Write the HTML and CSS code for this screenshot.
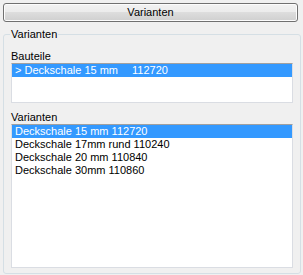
FILE: index.html
```html
<!DOCTYPE html>
<html lang="de">
<head>
    <meta charset="UTF-8">
    <title>Varianten</title>
    <link rel="stylesheet" href="styles.css">
</head>
<body>
    <button class="tab-button">Varianten</button>
    <fieldset class="group">
        <legend>Varianten</legend>
        <div class="field-label">Bauteile</div>
        <div class="listbox parts">
            <div class="row selected"><span class="part-name">&gt; Deckschale 15 mm</span>112720</div>
        </div>
        <div class="field-label second">Varianten</div>
        <div class="listbox variants">
            <div class="row selected">Deckschale 15 mm 112720</div>
            <div class="row">Deckschale 17mm rund 110240</div>
            <div class="row">Deckschale 20 mm 110840</div>
            <div class="row">Deckschale 30mm 110860</div>
        </div>
    </fieldset>
</body>
</html>
```

FILE: styles.css
```css
body {
    margin: 0;
    padding: 3px 0 0 3px;
    background-color: #f0f0f0;
    font-family: "Liberation Sans", Arial, sans-serif;
    font-size: 11px;
    line-height: 13px;
    color: #000;
}
.tab-button {
    display: block;
    width: 295px;
    height: 19px;
    margin: 0;
    padding: 0;
    border: 1px solid #707070;
    border-radius: 3px;
    box-shadow: inset 0 0 0 1px #fcfcfc;
    background: linear-gradient(to bottom, #f2f2f2 0%, #ebebeb 50%, #dddddd 50%, #cfcfcf 100%);
    font-family: inherit;
    font-size: 11px;
    line-height: 13px;
    color: #000;
}
.group {
    width: 298px;
    box-sizing: border-box;
    margin: 6px 0 0 0;
    padding: 0 7px 5px 7px;
    border: 1px solid #d5dfe5;
    border-radius: 3px;
}
.group legend {
    padding: 0 1px;
    margin-left: -1px;
    line-height: 13px;
}
.field-label {
    margin-top: 9px;
}
.field-label.second {
    margin-top: 8px;
}
.listbox {
    box-sizing: border-box;
    background-color: #fff;
    border: 1px solid #dadde3;
    border-top-color: #a0a0a0;
}
.listbox.parts {
    height: 40px;
}
.listbox.variants {
    height: 144px;
}
.row {
    height: 13px;
    padding-left: 3px;
    white-space: nowrap;
}
.row.selected {
    background-color: #3399ff;
    color: #fff;
}
.part-name {
    display: inline-block;
    width: 117px;
}
```
